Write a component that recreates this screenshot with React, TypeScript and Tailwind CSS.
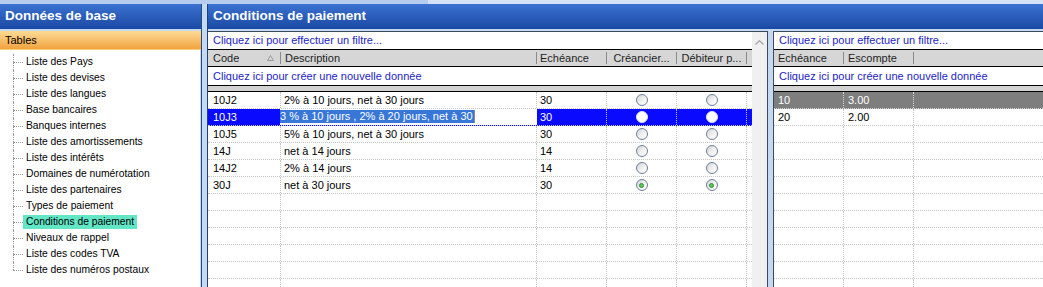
import React from "react";

const treeItems = [
  "Liste des Pays",
  "Liste des devises",
  "Liste des langues",
  "Base bancaires",
  "Banques internes",
  "Liste des amortissements",
  "Liste des intérêts",
  "Domaines de numérotation",
  "Liste des partenaires",
  "Types de paiement",
  "Conditions de paiement",
  "Niveaux de rappel",
  "Liste des codes TVA",
  "Liste des numéros postaux",
];

interface Row {
  code: string;
  desc: string;
  ech: string;
  checked?: boolean;
  selected?: boolean;
}

const rows: Row[] = [
  { code: "10J2", desc: "2% à 10 jours, net à 30 jours", ech: "30" },
  { code: "10J3", desc: "3 % à 10 jours , 2% à 20 jours, net à 30", ech: "30", selected: true },
  { code: "10J5", desc: "5% à 10 jours, net à 30 jours", ech: "30" },
  { code: "14J", desc: "net à 14 jours", ech: "14" },
  { code: "14J2", desc: "2% à 14 jours", ech: "14" },
  { code: "30J", desc: "net à 30 jours", ech: "30", checked: true },
];

const emptyRows = Array.from({ length: 7 });

const Radio: React.FC<{ checked?: boolean; onBlue?: boolean }> = ({ checked, onBlue }) => {
  if (onBlue) {
    return <div className="h-[12px] w-[12px] rounded-full border border-[#dfe4ff] bg-white" />;
  }
  return (
    <div className="flex h-[12px] w-[12px] items-center justify-center rounded-full border border-[#6f7f98] bg-linear-to-br from-[#cfd1d6] via-[#f0f0f0] to-white">
      {checked && <div className="h-[5px] w-[5px] rounded-full border border-[#2f8f34] bg-[#5cc85a]" />}
    </div>
  );
};

const HeaderSep = () => <div className="h-[12px] w-px shrink-0 bg-[#8a8a8a]" />;

const GridTop: React.FC<{ children: React.ReactNode }> = ({ children }) => (
  <>
    <div className="flex h-[18px] shrink-0 items-center border-b border-black bg-white pl-[5px] text-[#2323c6]">
      Cliquez ici pour effectuer un filtre...
    </div>
    <div className="flex h-[17px] shrink-0 border-b border-black bg-[#d6d6d6] text-[#1e1e1e]">{children}</div>
    <div className="flex h-[19px] shrink-0 items-center border-b border-black bg-white pl-[5px] text-[#2323c6]">
      Cliquez ici pour créer une nouvelle donnée
    </div>
    <div className="h-[6px] shrink-0 border-b border-black bg-[#d2d2d2]" />
  </>
);

const cellLine = "border-r border-dotted border-[#c4c4c4]";

export default function App() {
  return (
    <div className="flex h-[287px] w-[1043px] flex-col overflow-hidden bg-[#c5d9f1] font-['Liberation_Sans',Arial,sans-serif] text-[11px] text-black">
      {/* top strip */}
      <div className="flex h-[4px] shrink-0">
        <div className="w-[428px] bg-[#b5cdee]" />
        <div className="flex-1 bg-[#d3e2f6]" />
      </div>

      <div className="flex min-h-0 flex-1">
        {/* left panel */}
        <div className="flex w-[202px] shrink-0 flex-col border-r border-[#2a4a82]">
          <div className="flex h-[25px] shrink-0 items-center bg-linear-to-b from-[#3b72d1] to-[#1a49a4] pl-[5px] text-[13.5px] font-bold text-white">
            Données de base
          </div>
          <div className="h-[2px] shrink-0" />
          <div className="flex h-[19px] shrink-0 items-center border-b border-[#f7cf86] bg-linear-to-b from-[#fcdb94] to-[#f1a33b] pl-[5px]">
            Tables
          </div>
          <div className="mr-px flex-1 bg-white pt-[4px]">
            {treeItems.map((item, i) => {
              const last = i === treeItems.length - 1;
              const active = item === "Conditions de paiement";
              return (
                <div key={item} className="flex h-[16px] items-center">
                  <div className="ml-[13px] flex h-[16px] w-[10px] flex-col">
                    <div className="h-[8px] border-l border-dotted border-[#9a9a9a]" />
                    <div
                      className={
                        last
                          ? "h-[8px] border-t border-dotted border-[#9a9a9a]"
                          : "h-[8px] border-l border-t border-dotted border-[#9a9a9a]"
                      }
                    />
                  </div>
                  <span
                    className={
                      active
                        ? "h-[14px] bg-[#62e6c6] px-[3px] text-[10.3px] leading-[14px]"
                        : "h-[14px] px-[3px] text-[10.3px] leading-[14px]"
                    }
                  >
                    {item}
                  </span>
                </div>
              );
            })}
          </div>
        </div>

        <div className="w-[5px] shrink-0" />

        {/* right panel */}
        <div className="flex min-w-0 flex-1 flex-col border-l border-[#1f3f7a]">
          <div className="flex h-[25px] shrink-0 items-center bg-linear-to-b from-[#3b72d1] to-[#1a49a4] pl-[5px] text-[13.5px] font-bold text-white">
            Conditions de paiement
          </div>
          <div className="h-[2px] shrink-0" />

          <div className="flex min-h-0 flex-1">
            {/* main grid */}
            <div className="flex w-[560px] shrink-0 border-r border-t border-[#3c4a60]">
              <div className="flex w-[544px] flex-col">
                <GridTop>
                  <div className="flex w-[73px] items-center pl-[5px]">
                    <span className="flex-1">Code</span>
                    <svg width="7" height="6" viewBox="0 0 7 6" className="mr-[6px]">
                      <path d="M3.5 0.5 L6.5 5.5 L0.5 5.5 Z" fill="none" stroke="#9a9a9a" strokeWidth="1" />
                    </svg>
                    <HeaderSep />
                  </div>
                  <div className="flex w-[256px] items-center pl-[4px]">
                    <span className="flex-1">Description</span>
                    <HeaderSep />
                  </div>
                  <div className="flex w-[70px] items-center pl-[3px]">
                    <span className="flex-1">Echéance</span>
                    <HeaderSep />
                  </div>
                  <div className="flex w-[70px] items-center">
                    <span className="flex-1 text-center">Créancier...</span>
                    <HeaderSep />
                  </div>
                  <div className="flex w-[70px] items-center">
                    <span className="flex-1 text-center">Débiteur p...</span>
                    <HeaderSep />
                  </div>
                </GridTop>

                {rows.map((r) => {
                  const sel = !!r.selected;
                  return (
                    <div
                      key={r.code}
                      className={
                        sel
                          ? "flex h-[17px] shrink-0 border-b border-dotted border-[#c4c4c4] bg-[#0a0aff] text-white"
                          : "flex h-[17px] shrink-0 border-b border-dotted border-[#c4c4c4] bg-white"
                      }
                    >
                      <div className={`flex w-[73px] items-center pl-[5px] ${cellLine}`}>{r.code}</div>
                      {sel ? (
                        <div className="-ml-px flex w-[257px] items-start bg-white pt-[1px]">
                          <span className="h-[13px] bg-[#3876d8] pr-[1px] leading-[13px] text-white">{r.desc}</span>
                          <span className="h-[13px] w-px bg-[#8a8a8a]" />
                        </div>
                      ) : (
                        <div className={`flex w-[256px] items-center pl-[3px] ${cellLine}`}>{r.desc}</div>
                      )}
                      <div className={`flex w-[70px] items-center pl-[3px] ${cellLine}`}>{r.ech}</div>
                      <div className={`flex w-[70px] items-center justify-center ${cellLine}`}>
                        <Radio checked={r.checked} onBlue={sel} />
                      </div>
                      <div className={`flex w-[70px] items-center justify-center ${cellLine}`}>
                        <Radio checked={r.checked} onBlue={sel} />
                      </div>
                      <div className="flex-1" />
                    </div>
                  );
                })}
                {emptyRows.map((_, i) => (
                  <div key={i} className="flex h-[17px] shrink-0 border-b border-dotted border-[#c4c4c4] bg-white">
                    <div className={`w-[73px] ${cellLine}`} />
                    <div className={`w-[256px] ${cellLine}`} />
                    <div className={`w-[70px] ${cellLine}`} />
                    <div className={`w-[70px] ${cellLine}`} />
                    <div className={`w-[70px] ${cellLine}`} />
                    <div className="flex-1" />
                  </div>
                ))}
              </div>

              {/* scrollbar */}
              <div className="flex w-[15px] justify-center bg-[#f0f0f0] pt-[8px]">
                <svg width="9" height="5" viewBox="0 0 9 5">
                  <path d="M0.5 4.5 L4.5 0.8 L8.5 4.5" fill="none" stroke="#a6a6a6" strokeWidth="1.3" />
                </svg>
              </div>
            </div>

            <div className="w-[5px] shrink-0" />

            {/* right grid */}
            <div className="flex min-w-0 flex-1 flex-col border-l border-t border-[#3c4a60]">
              <GridTop>
                <div className="flex w-[70px] items-center pl-[4px]">
                  <span className="flex-1">Echéance</span>
                  <HeaderSep />
                </div>
                <div className="flex w-[70px] items-center pl-[4px]">
                  <span className="flex-1">Escompte</span>
                  <HeaderSep />
                </div>
                <div className="flex-1" />
              </GridTop>
              <div className="flex h-[17px] shrink-0 border-b border-dotted border-[#d8d8d8] bg-[#7e7e7e] text-white">
                <div className="flex w-[70px] items-center border-r border-dotted border-[#d8d8d8] pl-[4px]">10</div>
                <div className="flex w-[70px] items-center border-r border-dotted border-[#d8d8d8] pl-[4px]">3.00</div>
                <div className="flex-1" />
              </div>
              <div className="flex h-[17px] shrink-0 border-b border-dotted border-[#c4c4c4] bg-white">
                <div className={`flex w-[70px] items-center pl-[4px] ${cellLine}`}>20</div>
                <div className={`flex w-[70px] items-center pl-[4px] ${cellLine}`}>2.00</div>
                <div className="flex-1" />
              </div>
              {Array.from({ length: 11 }).map((_, i) => (
                <div key={i} className="flex h-[17px] shrink-0 border-b border-dotted border-[#c4c4c4] bg-white">
                  <div className={`w-[70px] ${cellLine}`} />
                  <div className={`w-[70px] ${cellLine}`} />
                  <div className="flex-1" />
                </div>
              ))}
            </div>
          </div>
        </div>
      </div>
    </div>
  );
}
